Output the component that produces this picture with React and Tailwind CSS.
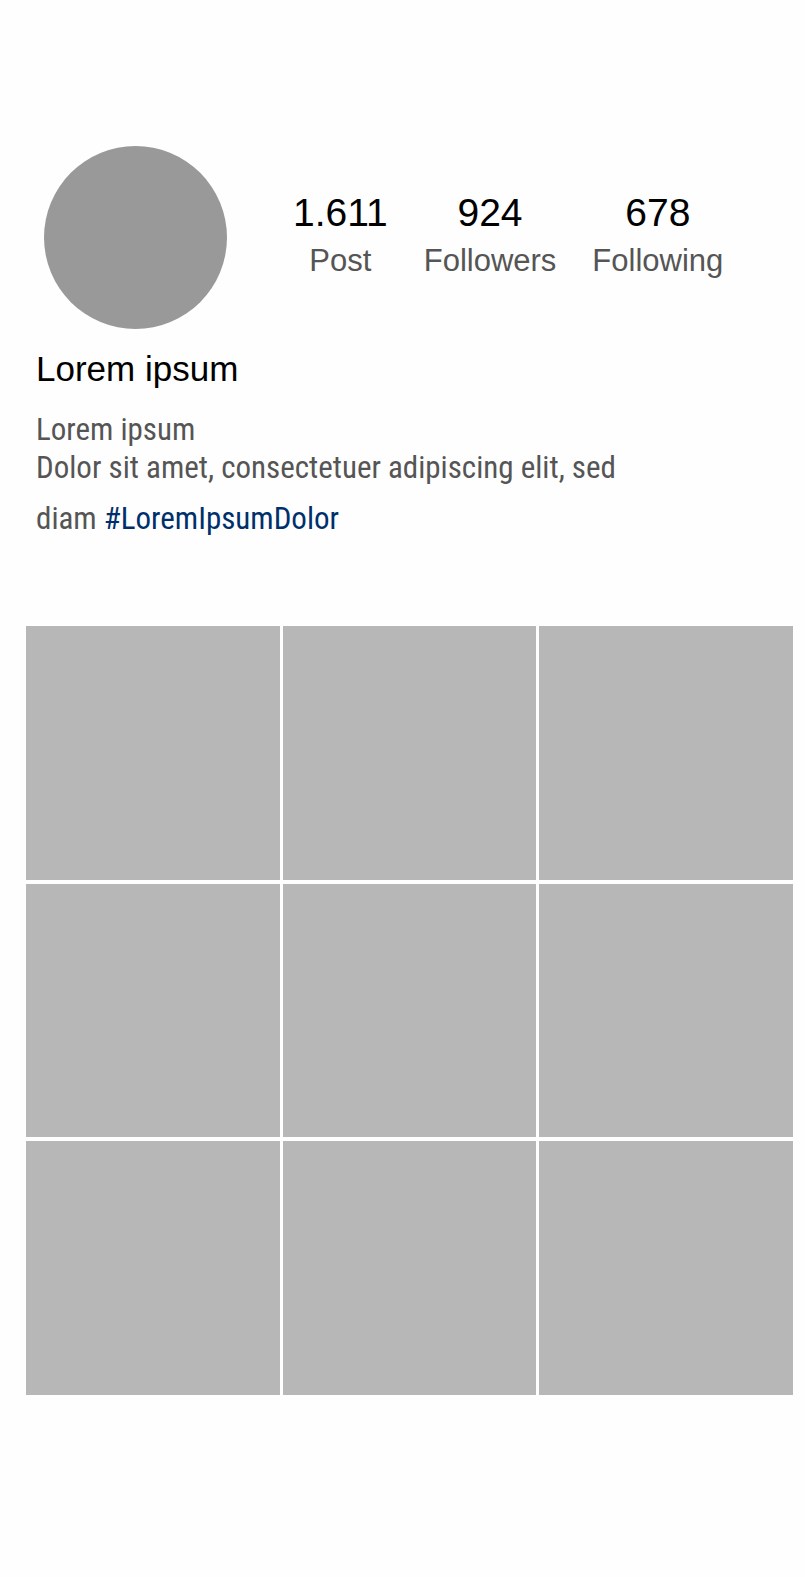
const stats = [
  { value: '1.611', label: 'Post' },
  { value: '924', label: 'Followers' },
  { value: '678', label: 'Following' },
];

const posts = [1, 2, 3, 4, 5, 6, 7, 8, 9];

function Stat({ value, label }) {
  return (
    <div className="flex flex-col-reverse items-center">
      <dt className="text-[31px] leading-10 text-[#555555]">{label}</dt>
      <dd className="text-[39px] leading-[56px] text-black">{value}</dd>
    </div>
  );
}

export default function App() {
  return (
    <main className="min-h-screen bg-[#fefefe] pt-[146px] pb-[182px] font-['Liberation_Sans',Arial,sans-serif]">
      <header className="px-9">
        <div className="flex items-center gap-[66px] pl-2">
          <div role="img" aria-label="Profile photo" className="size-[183px] shrink-0 rounded-full bg-[#999999]" />
          <dl className="flex gap-9 pb-[10px]">
            {stats.map((s) => (
              <Stat key={s.label} {...s} />
            ))}
          </dl>
        </div>
        <h1 className="mt-5 text-[35px] leading-10 text-black">Lorem ipsum</h1>
        <div className="mt-[22px] font-['Roboto_Condensed',Roboto,sans-serif] text-[31px] text-[#555555]">
          <p className="leading-[38px]">Lorem ipsum</p>
          <p className="leading-[38px]">Dolor sit amet, consectetuer adipiscing elit, sed</p>
          <p className="mt-[13px] leading-[38px]">
            diam <a href="#LoremIpsumDolor" className="text-[#00306b]">#LoremIpsumDolor</a>
          </p>
        </div>
      </header>
      <section aria-label="Posts" className="mt-[88px] grid grid-cols-3 gap-x-[3px] gap-y-1 pr-3 pl-[26px]">
        {posts.map((p) => (
          <div key={p} className="aspect-square bg-[#b7b7b7]" />
        ))}
      </section>
    </main>
  );
}
